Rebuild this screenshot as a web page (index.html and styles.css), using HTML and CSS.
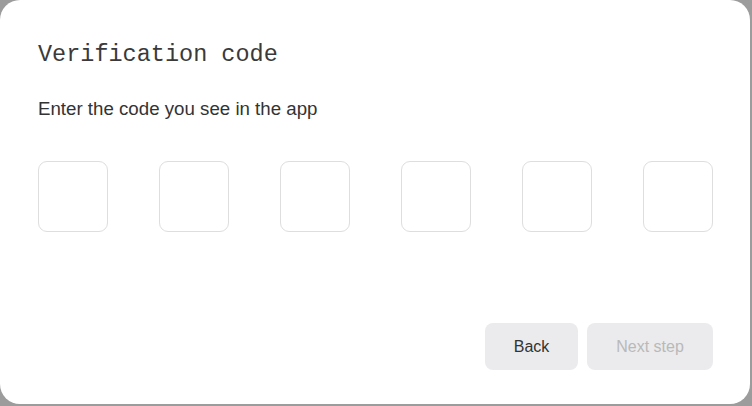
FILE: index.html
```html
<!DOCTYPE html>
<html>
<head>
<meta charset="utf-8">
<link rel="stylesheet" href="styles.css">
</head>
<body>
<div class="card">
  <h1 class="title">Verification code</h1>
  <p class="subtitle">Enter the code you see in the app</p>
  <div class="codes">
    <input class="digit" type="text" maxlength="1">
    <input class="digit" type="text" maxlength="1">
    <input class="digit" type="text" maxlength="1">
    <input class="digit" type="text" maxlength="1">
    <input class="digit" type="text" maxlength="1">
    <input class="digit" type="text" maxlength="1">
  </div>
  <div class="actions">
    <button class="btn back">Back</button>
    <button class="btn next" disabled>Next step</button>
  </div>
</div>
</body>
</html>
```
FILE: styles.css
```css
html, body {
  margin: 0;
  padding: 0;
  background: #9c9c9c;
  width: 752px;
  height: 406px;
  overflow: hidden;
}
.card {
  box-sizing: border-box;
  width: 750px;
  height: 404px;
  background: #fff;
  border-radius: 20px;
  padding: 39px 37px 0 38px;
  display: flex;
  flex-direction: column;
}
.title {
  margin: 0;
  font-family: "Liberation Mono", monospace;
  font-weight: normal;
  font-size: 23.5px;
  line-height: 32px;
  color: #3a3a3a;
}
.subtitle {
  margin: 26px 0 0;
  font-family: "Liberation Sans", Arial, sans-serif;
  font-size: 18.7px;
  line-height: 24px;
  color: #333;
}
.codes {
  margin-top: 40px;
  display: flex;
  gap: 51px;
}
.digit {
  box-sizing: border-box;
  width: 70px;
  height: 71px;
  border: 1px solid #dedede;
  border-radius: 9px;
  background: #fff;
  padding: 0;
  outline: none;
}
.actions {
  margin-top: 91px;
  display: flex;
  justify-content: flex-end;
  gap: 9px;
}
.btn {
  height: 47px;
  border: none;
  border-radius: 8px;
  background: #ebebed;
  font-family: "Liberation Sans", Arial, sans-serif;
  font-size: 16px;
  padding: 0;
}
.back {
  width: 93px;
  color: #333;
}
.next {
  width: 126px;
  color: #b9b9b9;
}
```
